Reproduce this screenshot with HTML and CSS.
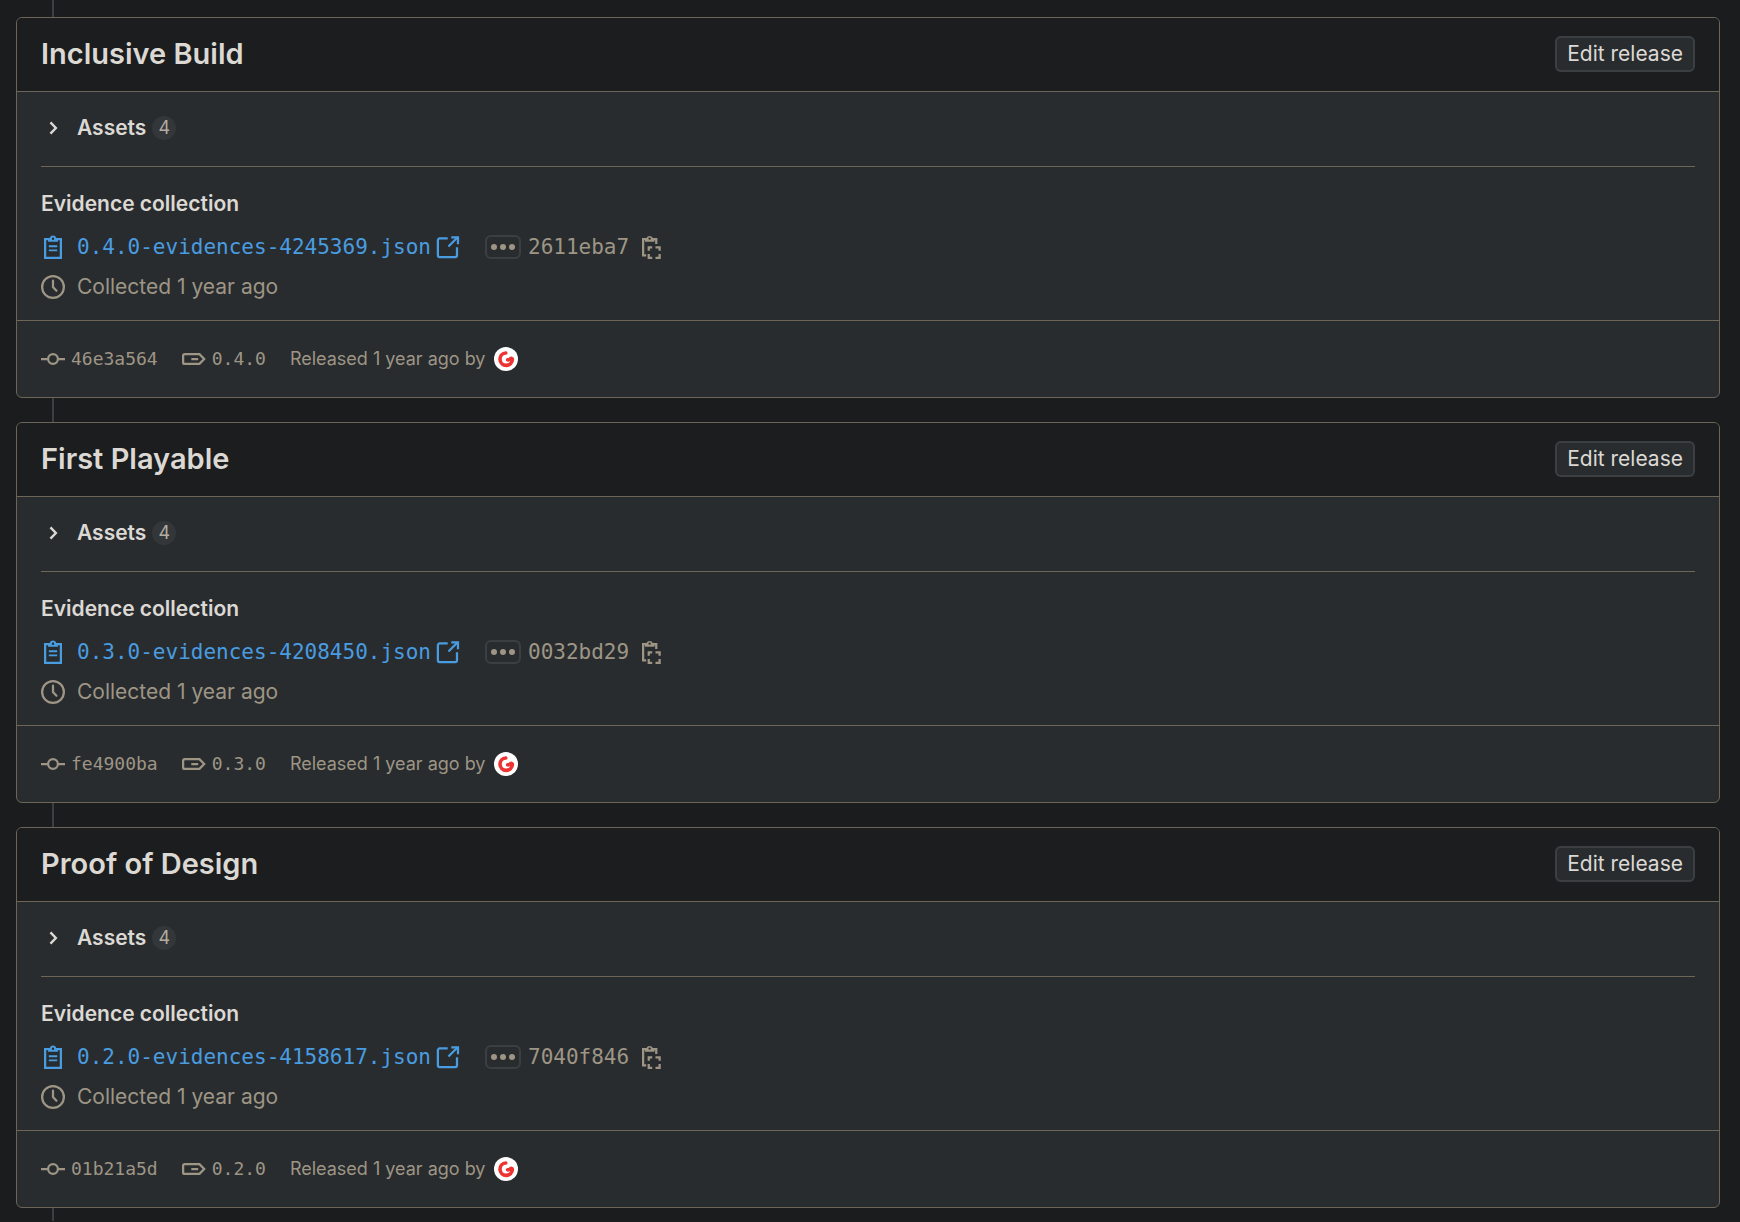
FILE: index.html
```
<!DOCTYPE html>
<html lang="en">

<head>
    <meta charset="UTF-8">
    <title>Releases</title>
    <link rel="stylesheet" href="styles.css">
</head>

<body>
    <svg class="sprite" width="0" height="0" aria-hidden="true">
        <symbol id="chevron" viewBox="0 0 16 16">
            <path d="M6.3 4.3 9.9 8l-3.6 3.7" fill="none" stroke="currentColor" stroke-width="1.6" />
        </symbol>
        <symbol id="clipboard" viewBox="0 0 16 16">
            <path d="M5.5 2.75H2.75v12.5h10.5V2.75H10.5" fill="none" stroke="currentColor" stroke-width="1.5" />
            <path fill="currentColor" fill-rule="evenodd" d="M5.8 2A2.3 2.3 0 0 1 10.2 2H11.3v2.5H4.7V2zM8 1.7a.8.8 0 1 0 0 1.6.8.8 0 0 0 0-1.6z" />
            <path d="M5.2 7.5h5.6M5.2 10.3h5.6" fill="none" stroke="currentColor" stroke-width="1.2" />
        </symbol>
        <symbol id="external" viewBox="0 0 16 16">
            <path d="M7.8 2.25H2.5A1.25 1.25 0 0 0 1.25 3.5v10A1.25 1.25 0 0 0 2.5 14.75h10.25A1.25 1.25 0 0 0 14 13.5V8.2M8.3 7.7 14.3 1.7" fill="none" stroke="currentColor" stroke-width="1.5" />
            <path d="M10.2.9h5.2v5.2h-1.5V2.4h-3.7z" fill="currentColor" />
        </symbol>
        <symbol id="clock" viewBox="0 0 16 16">
            <circle cx="8" cy="8" r="7.25" fill="none" stroke="currentColor" stroke-width="1.5" />
            <path d="M8 3.75V8l2.3 2.5" fill="none" stroke="currentColor" stroke-width="1.5" stroke-linecap="round" />
        </symbol>
        <symbol id="copy" viewBox="0 0 16 16">
            <path d="M4.8 13.5H2.75V2.75H5M10 2.75h1.5V6" fill="none" stroke="currentColor" stroke-width="1.5" />
            <path fill="currentColor" fill-rule="evenodd" d="M5 2A2.3 2.3 0 0 1 9.2 2H10.3v2.5H4V2zM7.1 1.6a.8.8 0 1 0 0 1.6.8.8 0 0 0 0-1.6z" />
            <path d="M8.8 8.25H6.5v2.3M11 8.25h2.75v2.3M6.5 12.7v2.55h2.3M11 15.25h2.75V12.7" fill="none" stroke="currentColor" stroke-width="1.5" />
        </symbol>
        <symbol id="commit" viewBox="0 0 16 16">
            <circle cx="8" cy="8" r="3.25" fill="none" stroke="currentColor" stroke-width="1.5" />
            <path d="M0 8h4.5M11.5 8H16" fill="none" stroke="currentColor" stroke-width="1.5" />
        </symbol>
        <symbol id="tag" viewBox="0 0 16 16">
            <path d="M1.75 4.75h9.9L14.8 8l-3.15 3.25h-9.9a1 1 0 0 1-1-1v-4.5a1 1 0 0 1 1-1zM6.2 8h4.6" fill="none" stroke="currentColor" stroke-width="1.5" />
        </symbol>
        <symbol id="avatar" viewBox="0 0 24 24">
            <circle cx="12" cy="12" r="12" fill="#fff" />
            <path d="M11.8 6a6.2 6.2 0 1 0 6.6 6.4c-.1-1.2-1.3-1.3-2-.6-.8.8-1.6 1.2-2.8 1" fill="none" stroke="#ee3333" stroke-width="3.6" stroke-linecap="round" />
        </symbol>
    </svg>

    <main class="releases">
        <section class="release">
            <header class="release-header">
                <h2>Inclusive Build</h2>
                <button type="button" class="edit">Edit release</button>
            </header>
            <div class="release-body">
                <div class="assets">
                    <button type="button" class="assets-toggle">
                        <svg class="icon"><use href="#chevron" /></svg>
                        Assets
                        <span class="badge">4</span>
                    </button>
                </div>
                <div class="evidence">
                    <h3>Evidence collection</h3>
                    <div class="row">
                        <svg class="icon link-icon"><use href="#clipboard" /></svg>
                        <a href="#" class="file">0.4.0-evidences-4245369.json<svg class="icon"><use href="#external" /></svg></a>
                        <button type="button" class="expander" aria-label="Expand"><i></i><i></i><i></i></button>
                        <span class="sha">2611eba7</span>
                        <button type="button" class="copy" aria-label="Copy"><svg class="icon"><use href="#copy" /></svg></button>
                    </div>
                    <div class="row collected">
                        <svg class="icon"><use href="#clock" /></svg>
                        <span>Collected 1 year ago</span>
                    </div>
                </div>
            </div>
            <footer class="release-footer">
                <a href="#" class="ref"><svg class="icon"><use href="#commit" /></svg>46e3a564</a>
                <a href="#" class="ref"><svg class="icon"><use href="#tag" /></svg>0.4.0</a>
                <span class="author">Released 1 year ago by <svg class="icon"><use href="#avatar" /></svg></span>
            </footer>
        </section>

        <section class="release">
            <header class="release-header">
                <h2>First Playable</h2>
                <button type="button" class="edit">Edit release</button>
            </header>
            <div class="release-body">
                <div class="assets">
                    <button type="button" class="assets-toggle">
                        <svg class="icon"><use href="#chevron" /></svg>
                        Assets
                        <span class="badge">4</span>
                    </button>
                </div>
                <div class="evidence">
                    <h3>Evidence collection</h3>
                    <div class="row">
                        <svg class="icon link-icon"><use href="#clipboard" /></svg>
                        <a href="#" class="file">0.3.0-evidences-4208450.json<svg class="icon"><use href="#external" /></svg></a>
                        <button type="button" class="expander" aria-label="Expand"><i></i><i></i><i></i></button>
                        <span class="sha">0032bd29</span>
                        <button type="button" class="copy" aria-label="Copy"><svg class="icon"><use href="#copy" /></svg></button>
                    </div>
                    <div class="row collected">
                        <svg class="icon"><use href="#clock" /></svg>
                        <span>Collected 1 year ago</span>
                    </div>
                </div>
            </div>
            <footer class="release-footer">
                <a href="#" class="ref"><svg class="icon"><use href="#commit" /></svg>fe4900ba</a>
                <a href="#" class="ref"><svg class="icon"><use href="#tag" /></svg>0.3.0</a>
                <span class="author">Released 1 year ago by <svg class="icon"><use href="#avatar" /></svg></span>
            </footer>
        </section>

        <section class="release">
            <header class="release-header">
                <h2>Proof of Design</h2>
                <button type="button" class="edit">Edit release</button>
            </header>
            <div class="release-body">
                <div class="assets">
                    <button type="button" class="assets-toggle">
                        <svg class="icon"><use href="#chevron" /></svg>
                        Assets
                        <span class="badge">4</span>
                    </button>
                </div>
                <div class="evidence">
                    <h3>Evidence collection</h3>
                    <div class="row">
                        <svg class="icon link-icon"><use href="#clipboard" /></svg>
                        <a href="#" class="file">0.2.0-evidences-4158617.json<svg class="icon"><use href="#external" /></svg></a>
                        <button type="button" class="expander" aria-label="Expand"><i></i><i></i><i></i></button>
                        <span class="sha">7040f846</span>
                        <button type="button" class="copy" aria-label="Copy"><svg class="icon"><use href="#copy" /></svg></button>
                    </div>
                    <div class="row collected">
                        <svg class="icon"><use href="#clock" /></svg>
                        <span>Collected 1 year ago</span>
                    </div>
                </div>
            </div>
            <footer class="release-footer">
                <a href="#" class="ref"><svg class="icon"><use href="#commit" /></svg>01b21a5d</a>
                <a href="#" class="ref"><svg class="icon"><use href="#tag" /></svg>0.2.0</a>
                <span class="author">Released 1 year ago by <svg class="icon"><use href="#avatar" /></svg></span>
            </footer>
        </section>
    </main>
</body>

</html>
```
FILE: styles.css
```
* {
    box-sizing: border-box;
}

body {
    margin: 0;
    background-color: #1b1c1e;
    color: #dcd9d4;
    font-family: Inter, sans-serif;
    font-size: 21px;
    line-height: 28px;
}

h2,
h3 {
    margin: 0;
    font-weight: 600;
}

h2 {
    font-size: 29px;
    line-height: 36px;
}

h3 {
    font-size: 21px;
    line-height: 28px;
}

button {
    font: inherit;
    color: inherit;
    background: none;
    border: none;
    padding: 0;
    cursor: pointer;
}

.sprite {
    position: absolute;
}

.icon {
    width: 24px;
    height: 24px;
    flex: none;
}

.releases {
    position: relative;
    display: flex;
    flex-direction: column;
    gap: 24px;
    padding: 17px 20px 13px 16px;
}

/* timeline behind the cards */
.releases::before {
    content: "";
    position: absolute;
    top: 0;
    bottom: 0;
    left: 52px;
    width: 2px;
    background-color: #3b3f42;
}

.release {
    position: relative;
    border: 1px solid #6d6557;
    border-radius: 6px;
    background-color: #282c2f;
    overflow: hidden;
}

.release-header {
    display: flex;
    align-items: center;
    justify-content: space-between;
    min-height: 74px;
    padding: 0 24px 1px;
    background-color: #1b1d1e;
    border-bottom: 1px solid #6d6557;
}

.edit {
    height: 36px;
    padding: 0 12px;
    background-color: #282c2f;
    border-radius: 6px;
    box-shadow: inset 0 0 0 2px #3b3f42;
}

.release-body {
    padding: 0 24px 19px;
}

.assets {
    display: flex;
    align-items: center;
    min-height: 75px;
    padding-bottom: 2px;
    border-bottom: 1px solid #6d6557;
}

.assets-toggle {
    display: flex;
    align-items: center;
    font-weight: 600;
}

.assets-toggle .icon {
    margin-right: 12px;
}

.badge {
    min-width: 24px;
    margin-left: 6px;
    border-radius: 12px;
    background-color: #33373a;
    color: #b3aca0;
    font-size: 18px;
    font-weight: 400;
    line-height: 24px;
    text-align: center;
}

.evidence {
    padding-top: 23px;
}

.row {
    display: flex;
    align-items: center;
    margin-top: 15px;
}

.file {
    display: flex;
    align-items: center;
    gap: 5px;
    margin-left: 12px;
}

.file,
.sha {
    font-family: "DejaVu Sans Mono", monospace;
    font-size: 21px;
}

.file,
.link-icon {
    color: #4a9ce0;
    text-decoration: none;
}

.expander {
    display: flex;
    align-items: center;
    justify-content: center;
    gap: 3px;
    width: 36px;
    height: 24px;
    margin-left: 25px;
    border: 2px solid #3b3f42;
    border-radius: 6px;
}

.expander i {
    width: 6px;
    height: 6px;
    border-radius: 50%;
    background-color: #9e9585;
}

.sha {
    margin-left: 7px;
    color: #9e9585;
}

.copy {
    display: flex;
    margin-left: 10px;
    color: #9e9585;
}

.collected {
    gap: 12px;
    margin-top: 12px;
    color: #9e9585;
}

.release-footer {
    display: flex;
    align-items: center;
    gap: 24px;
    min-height: 77px;
    padding: 0 24px;
    border-top: 1px solid #6d6557;
    color: #9e9585;
    font-size: 18px;
}

.ref {
    display: flex;
    align-items: center;
    gap: 6px;
    color: inherit;
    font-family: "DejaVu Sans Mono", monospace;
    text-decoration: none;
}

.author {
    display: flex;
    align-items: center;
    gap: 9px;
}
```
